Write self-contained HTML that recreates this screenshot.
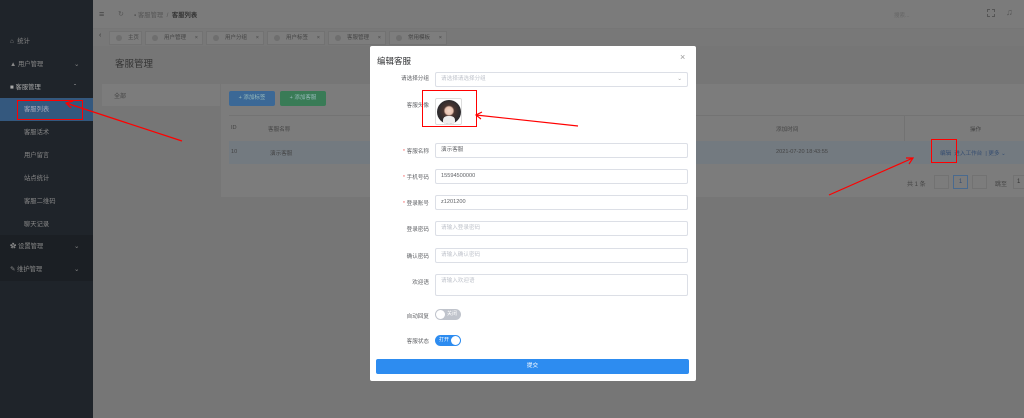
<!DOCTYPE html>
<html><head><meta charset="utf-8"><style>
*{box-sizing:border-box;margin:0;padding:0}
body{width:1024px;height:418px;overflow:hidden;background:#767676;font-family:"Liberation Sans","Noto Sans CJK SC",sans-serif;font-size:6px;color:#333;position:relative}
.abs{position:absolute}
#side{left:0;top:0;width:93px;height:418px;background:#1f242a}
.si{position:absolute;left:0;width:93px;height:23px;line-height:23px;color:#888;font-size:6.3px}
.top{left:93px;top:0;width:931px;height:28px;background:#7b7b7b}
.tabs{left:93px;top:29px;width:931px;height:17px;background:#787878}
.tab{position:absolute;top:2px;height:14px;background:#7d7d7d;border:1px solid #727272;color:#444;font-size:5.5px;line-height:12px;padding-left:18px}
.tab:before{content:"";position:absolute;left:6px;top:3px;width:6px;height:6px;border-radius:50%;background:#6e6e6e}
.card{background:#7c7c7c}
#modal{left:370px;top:46px;width:326px;height:335px;background:#fff;border-radius:2px}
.lab{position:absolute;right:267px;font-size:5.6px;color:#606266;text-align:right;white-space:nowrap}
.inp{position:absolute;left:65px;width:253px;height:15px;border:1px solid #dcdfe6;border-radius:2px;font-size:5.6px;line-height:13px;padding-left:5px;color:#606266}
.ph{color:#c0c4cc}
.req:before{content:"* ";color:#f56c6c}
</style></head><body>
<div id="side" class="abs">
<div class="si" style="top:30px;padding-left:10px">⌂ &nbsp;统计</div>
<div class="si" style="top:53px;padding-left:10px">▲ 用户管理<span style="position:absolute;left:74px">⌄</span></div>
<div class="si" style="top:76px;padding-left:10px;color:#aaa">■ 客服管理<span style="position:absolute;left:74px">ˆ</span></div>
<div class="si" style="top:98px;background:#34587e;color:#aab;padding-left:24px">客服列表</div>
<div class="si" style="top:121px;padding-left:24px">客服话术</div>
<div class="si" style="top:144px;padding-left:24px">用户留言</div>
<div class="si" style="top:167px;padding-left:24px">站点统计</div>
<div class="si" style="top:190px;padding-left:24px">客服二维码</div>
<div class="si" style="top:213px;padding-left:24px">聊天记录</div>
<div class="si" style="top:235px;padding-left:10px;background:#1b1f24">✿ 设置管理<span style="position:absolute;left:74px">⌄</span></div>
<div class="si" style="top:258px;padding-left:10px;background:#1b1f24">✎ 维护管理<span style="position:absolute;left:74px">⌄</span></div>
</div>
<div class="abs top"></div>
<div class="abs" style="left:99px;top:9px;font-size:9px;color:#444">≡</div>
<div class="abs" style="left:118px;top:10px;font-size:7px;color:#555">↻</div>
<div class="abs" style="left:134px;top:10px;font-size:6.3px;color:#555">▪ 客服管理 &nbsp;/ &nbsp;<b style="color:#333">客服列表</b></div>
<div class="abs" style="left:894px;top:11px;font-size:5.5px;color:#666">搜索...</div>
<div class="abs" style="left:987px;top:9px;width:8px;height:8px;border:1px dashed #555"></div>
<div class="abs" style="left:1006px;top:7px;font-size:9px;color:#555">♫</div>
<div class="abs tabs">
<div class="abs" style="left:6px;top:3px;color:#333;font-size:7px">‹</div>
<div class="tab" style="left:16px;width:33px">主页</div>
<div class="tab" style="left:52px;width:58px">用户管理 <span style="position:absolute;right:4px">×</span></div>
<div class="tab" style="left:113px;width:58px">用户分组 <span style="position:absolute;right:4px">×</span></div>
<div class="tab" style="left:174px;width:58px">用户标签 <span style="position:absolute;right:4px">×</span></div>
<div class="tab" style="left:235px;width:58px">客服管理 <span style="position:absolute;right:4px">×</span></div>
<div class="tab" style="left:296px;width:58px">常用模板 <span style="position:absolute;right:4px">×</span></div>
</div>
<div class="abs" style="left:115px;top:56px;font-size:9.5px;color:#333">客服管理</div>
<div class="abs card" style="left:102px;top:84px;width:118px;height:22px"><span style="position:absolute;left:12px;top:7px;font-size:6px;color:#444">全部</span></div>
<div class="abs card" style="left:221px;top:84px;width:803px;height:113px"></div>
<div class="abs" style="left:229px;top:91px;width:46px;height:15px;background:#3b6896;border-radius:2px;color:#9bb;font-size:5.5px;line-height:15px;text-align:center">+ 添加标签</div>
<div class="abs" style="left:280px;top:91px;width:46px;height:15px;background:#397b56;border-radius:2px;color:#9bb;font-size:5.5px;line-height:15px;text-align:center">+ 添加客服</div>
<div class="abs" style="left:229px;top:115px;width:795px;height:1px;background:#737373"></div>
<div class="abs" style="left:231px;top:125px;font-size:5.6px;color:#444">ID</div>
<div class="abs" style="left:268px;top:125px;font-size:5.6px;color:#444">客服名称</div>
<div class="abs" style="left:776px;top:125px;font-size:5.6px;color:#444">添加时间</div>
<div class="abs" style="left:970px;top:125px;font-size:5.6px;color:#444">操作</div>
<div class="abs" style="left:904px;top:116px;width:1px;height:48px;background:#727272"></div>
<div class="abs" style="left:229px;top:141px;width:795px;height:23px;background:#737a80"></div>
<div class="abs" style="left:231px;top:149px;font-size:5.6px;color:#444">10</div>
<div class="abs" style="left:270px;top:149px;font-size:5.6px;color:#444">演示客服</div>
<div class="abs" style="left:776px;top:149px;font-size:5.6px;color:#444">2021-07-20 18:43:55</div>
<div class="abs" style="left:940px;top:149px;font-size:5.6px;color:#354d70">编辑 &nbsp;进入工作台 &nbsp;| 更多 ⌄</div>
<div class="abs" style="left:907px;top:179px;font-size:6px;color:#444">共 1 条</div>
<div class="abs" style="left:934px;top:175px;width:15px;height:14px;border:1px solid #727272"></div>
<div class="abs" style="left:953px;top:175px;width:15px;height:14px;border:1px solid #4a6a8e;color:#354d70;font-size:6px;text-align:center;line-height:12px">1</div>
<div class="abs" style="left:972px;top:175px;width:15px;height:14px;border:1px solid #727272"></div>
<div class="abs" style="left:995px;top:179px;font-size:6px;color:#444">跳至</div>
<div class="abs" style="left:1013px;top:175px;width:15px;height:14px;border:1px solid #727272;font-size:6px;line-height:12px;padding-left:3px">1</div>

<div id="modal" class="abs">
<div class="abs" style="left:7px;top:9px;font-size:8.5px;color:#303133">编辑客服</div>
<div class="abs" style="left:310px;top:6px;font-size:9px;color:#999">×</div>
<div class="lab" style="top:28px">请选择分组</div>
<div class="inp ph" style="top:26px">请选择请选择分组<span style="position:absolute;right:5px;color:#999">⌄</span></div>
<div class="lab" style="top:55px">客服头像</div>
<div class="abs" style="left:65px;top:52px;width:27px;height:27px;border:1px solid #ddd;border-radius:2px;background:#fff">
<div style="position:absolute;left:1px;top:1px;width:24px;height:24px;border-radius:50%;background:radial-gradient(circle at 50% 45%,#f1d6c8 0,#e8c2b0 22%,#4a3530 30%,#2e2b2e 60%);overflow:hidden"><div style="position:absolute;left:6px;top:16px;width:12px;height:10px;background:#eee;border-radius:40% 40% 0 0"></div></div></div>
<div class="lab req" style="top:101px">客服名称</div>
<div class="inp" style="top:97px">演示客服</div>
<div class="lab req" style="top:127px">手机号码</div>
<div class="inp" style="top:123px">15594500000</div>
<div class="lab req" style="top:153px">登录账号</div>
<div class="inp" style="top:149px">z1201200</div>
<div class="lab" style="top:179px">登录密码</div>
<div class="inp ph" style="top:175px">请输入登录密码</div>
<div class="lab" style="top:206px">确认密码</div>
<div class="inp ph" style="top:202px">请输入确认密码</div>
<div class="lab" style="top:232px">欢迎语</div>
<div class="inp ph" style="top:228px;height:22px;line-height:10px;padding-top:1px">请输入欢迎语</div>
<div class="lab" style="top:266px">自动回复</div>
<div class="abs" style="left:65px;top:263px;width:26px;height:11px;border-radius:6px;background:#c0c4cc;color:#fff;font-size:5px;line-height:11px;padding-left:12px">关闭<div style="position:absolute;left:1px;top:1px;width:9px;height:9px;border-radius:50%;background:#fff"></div></div>
<div class="lab" style="top:291px">客服状态</div>
<div class="abs" style="left:65px;top:289px;width:26px;height:11px;border-radius:6px;background:#2d8cf0;color:#fff;font-size:5px;line-height:11px;padding-left:4px">打开<div style="position:absolute;left:16px;top:1px;width:9px;height:9px;border-radius:50%;background:#fff"></div></div>
<div class="abs" style="left:6px;top:313px;width:313px;height:15px;background:#2d8cf0;border-radius:2px;color:#fff;font-size:5.6px;text-align:center;line-height:15px">提交</div>
</div>

<div class="abs" style="left:17px;top:100px;width:66px;height:20px;border:1.5px solid #f00"></div>
<div class="abs" style="left:422px;top:90px;width:55px;height:37px;border:1.5px solid #f00"></div>
<div class="abs" style="left:931px;top:139px;width:26px;height:24px;border:1.5px solid #f00"></div>
<svg class="abs" style="left:0;top:0" width="1024" height="418">
<g stroke="#f00" stroke-width="1.2" fill="none">
<line x1="182" y1="141" x2="66" y2="103"/><path d="M73 101 L66 103 L71 108"/>
<line x1="578" y1="126" x2="476" y2="115"/><path d="M482 112 L476 115 L481 119"/>
<line x1="829" y1="195" x2="913" y2="158"/><path d="M906 158 L913 158 L909 164"/>
</g></svg>
</body></html>
